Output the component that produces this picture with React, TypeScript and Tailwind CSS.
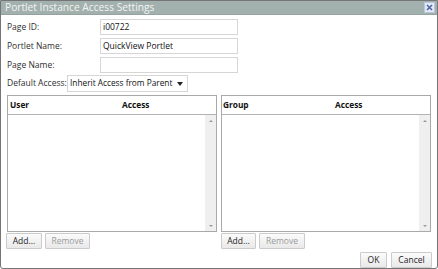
import React from "react";

const Btn = ({ label, disabled = false, className = "" }: { label: string; disabled?: boolean; className?: string }) => (
  <button
    className={`h-[16px] flex items-center justify-center border border-[#cbcbcb] rounded-[1px] bg-gradient-to-b from-[#fbfbfb] to-[#e9e9e9] text-[8.5px] leading-none whitespace-nowrap ${
      disabled ? "text-[#9a9a9a]" : "text-[#1e1e1e]"
    } ${className}`}
  >
    {label}
  </button>
);

const Field = ({ label, value }: { label: string; value?: string }) => (
  <div className="flex items-center h-[16px]">
    <span className="w-[93px] text-[#2e2e2e]">{label}</span>
    <div className="w-[138px] h-[16px] border border-[#d6d6d6] bg-white flex items-center px-[2px] text-[#111]">
      {value}
    </div>
  </div>
);

const Panel = ({ first, second, pad }: { first: string; second: string; pad: string }) => (
  <div className="w-[210px] h-[137px] border border-[#a9a9a9] flex flex-col bg-white">
    <div className={`h-[19px] border-b border-[#b3b3b3] flex items-center font-bold text-[8.3px] text-[#111] ${pad}`}>
      <span className="w-[112px]">{first}</span>
      <span>{second}</span>
    </div>
    <div className="flex-1 flex justify-end">
      <div className="w-[11px] bg-[#efefef] flex flex-col items-center justify-between pt-[5px] pb-[4px]">
        <span className="w-0 h-0 border-l-[2px] border-r-[2px] border-b-[2px] border-l-transparent border-r-transparent border-b-[#999]" />
        <span className="w-0 h-0 border-l-[2px] border-r-[2px] border-t-[2px] border-l-transparent border-r-transparent border-t-[#999]" />
      </div>
    </div>
  </div>
);

export default function App() {
  return (
    <div className="w-[438px] h-[269px] bg-white border border-[#757575] rounded-b-[3px] flex flex-col text-[8.5px] leading-none whitespace-nowrap font-['Open_Sans','Noto_Sans',sans-serif] overflow-hidden">
      <div className="h-[14px] bg-[#a3b1ae] border-b border-[#95a39f] flex items-center justify-between pl-[4px] pr-[2px]">
        <span className="text-[#f1f4f3] text-[10.2px]">Portlet Instance Access Settings</span>
        <span className="w-[11px] h-[11px] bg-[#e3e9f6] border border-[#b7c4e2] flex items-center justify-center">
          <svg width="7" height="7" viewBox="0 0 7 7">
            <path d="M1 1L6 6M6 1L1 6" stroke="#4f64a3" strokeWidth="1.6" />
          </svg>
        </span>
      </div>
      <div className="flex-1 flex flex-col pl-[6px] pr-[5px] pt-[4px]">
        <div className="flex flex-col gap-[3px]">
          <Field label="Page ID:" value="i00722" />
          <Field label="Portlet Name:" value="QuickView Portlet" />
          <Field label="Page Name:" />
        </div>
        <div className="flex items-center h-[17px] mt-[2px]">
          <span className="w-[60px] text-[#2e2e2e]">Default Access:</span>
          <div className="w-[121px] h-[17px] border border-[#d6d6d6] flex items-center justify-between pl-[2px] pr-[4px] text-[#111]">
            <span className="text-[8.3px]">Inherit Access from Parent</span>
            <span className="w-0 h-0 border-l-[3px] border-r-[3px] border-t-[4px] border-l-transparent border-r-transparent border-t-[#222]" />
          </div>
        </div>
        <div className="flex gap-[4px] mt-[3px]">
          <div className="flex flex-col gap-[1px]">
            <Panel first="User" second="Access" pad="pl-[2px]" />
            <div className="flex gap-[3px] -ml-[1px]">
              <Btn label="Add..." className="w-[36px]" />
              <Btn label="Remove" disabled className="w-[45px]" />
            </div>
          </div>
          <div className="flex flex-col gap-[1px]">
            <Panel first="Group" second="Access" pad="pl-[1px]" />
            <div className="flex gap-[3px]">
              <Btn label="Add..." className="w-[35px]" />
              <Btn label="Remove" disabled className="w-[46px]" />
            </div>
          </div>
        </div>
        <div className="flex justify-end gap-[4px] mt-[3px]">
          <Btn label="OK" className="w-[27px] h-[14px]" />
          <Btn label="Cancel" className="w-[41px] h-[14px]" />
        </div>
      </div>
    </div>
  );
}
